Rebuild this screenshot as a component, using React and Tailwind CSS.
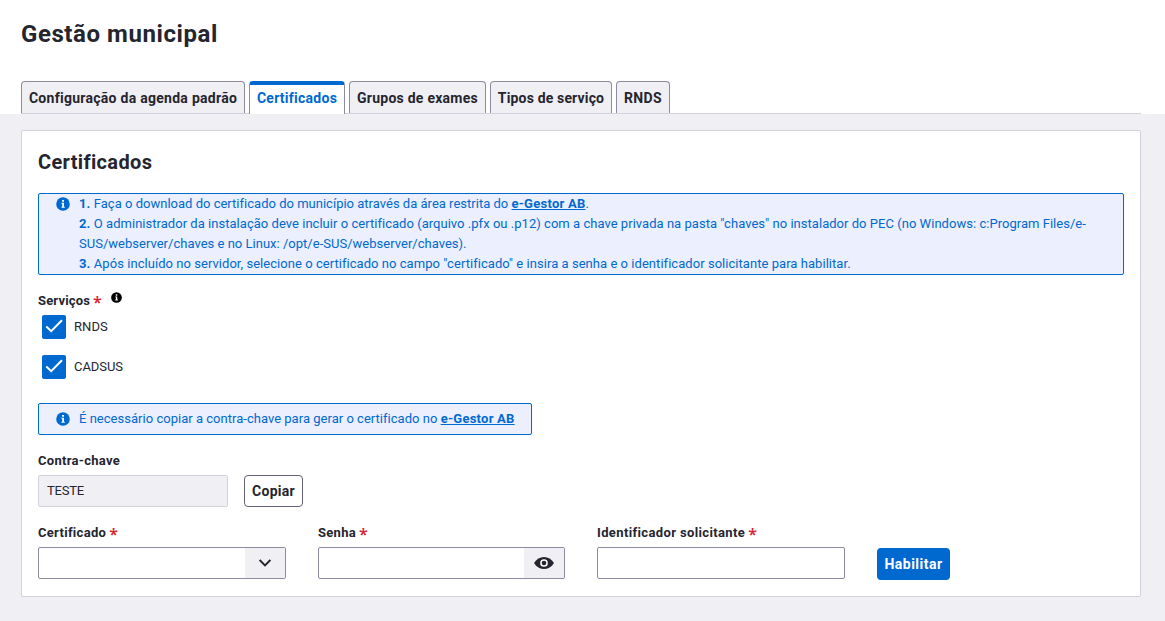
import React from "react";

const tabs = [
  { label: "Configuração da agenda padrão", size: "w-[224px] tracking-[0.276px]" },
  { label: "Certificados", size: "w-24 tracking-[0.256px]", active: true },
  { label: "Grupos de exames", size: "w-[137px] tracking-[0.254px]" },
  { label: "Tipos de serviço", size: "w-[122px] tracking-[0.16px]" },
  { label: "RNDS", size: "w-[54px] tracking-[0.36px]" },
];

function InfoIcon({ className }) {
  return (
    <svg viewBox="0 0 14 14" className={className} aria-hidden="true">
      <circle cx="7" cy="7" r="6.8" fill="currentColor" />
      <path d="M6.1 2.9h1.9v1.8H6.1zM5.4 5.7H8v4h.8v1.1H5.4V9.700h.8V6.800h-.8z" fill="#fff" />
    </svg>
  );
}

function Tab({ label, size, active }) {
  return (
    <div
      className={`${size} flex h-8 shrink-0 justify-center whitespace-nowrap rounded-t border-x border-[#8c8ba3] text-sm font-bold leading-[18px] ${
        active
          ? "-mb-px h-[33px] border-t-4 border-t-[#0069d0] bg-white pt-1 text-[#0069d0]"
          : "border-t bg-[#f0eff4] pt-[7px]"
      }`}
    >
      {label}
    </div>
  );
}

function Label({ children, className = "", required }) {
  return (
    <div className={`flex h-5 items-center whitespace-nowrap text-[13px] font-bold leading-5 ${className}`}>
      {children}
      {required && (
        <span className="ml-[3px] h-5 w-[9px] font-['Noto_Sans',sans-serif] text-base font-semibold leading-[23px] tracking-normal text-[#d92632]">*</span>
      )}
    </div>
  );
}

function Checkbox({ label, className }) {
  return (
    <label className="ml-1 flex h-6 items-center gap-2">
      <span className="flex size-6 items-center justify-center rounded-xs bg-[#0069d0]">
        <svg viewBox="0 0 24 24" className="size-6" fill="none" stroke="#fff" strokeWidth="2">
          <path d="M4.3 11.500 9.200 16.200 20 5.300" />
        </svg>
      </span>
      <span className={`text-[13px] leading-5 ${className}`}>{label}</span>
    </label>
  );
}

function Link({ children }) {
  return (
    <a href="#" className="font-bold tracking-[0.246px] underline">
      {children}
    </a>
  );
}

function Step({ n, children }) {
  return (
    <>
      <b>{n}.</b>
      <span className="ml-[3.500px]">{children}</span>
    </>
  );
}

export default function App() {
  return (
    <div className="flex min-h-[621px] w-full flex-col bg-[#f0eff4] font-[Roboto,sans-serif] text-[#25252f]">
      <header className="h-[114px] bg-white pl-[21px] pr-6 pt-[18px]">
        <h1 className="h-[63px] text-2xl font-bold leading-8 tracking-[0.57px]">Gestão municipal</h1>
        <nav className="flex h-[33px] gap-1 border-b border-[#d2d2dc]">
          {tabs.map((t) => (
            <Tab key={t.label} {...t} />
          ))}
        </nav>
      </header>

      <main className="ml-[21px] mr-6 mt-4 h-[467px] rounded-xs border border-[#d2d2dc] bg-white px-4 pt-[18px]">
        <h2 className="h-11 text-xl font-bold leading-[26px] tracking-[0.341px]">Certificados</h2>

        <section className="flex h-[82px] rounded-xs border border-[#0069d0] bg-[#ebeffe] pl-[17px] text-[13px] leading-5 text-[#0069d0]">
          <InfoIcon className="mr-[9px] mt-[3px] size-3.5 shrink-0" />
          <div className="whitespace-nowrap">
            <p className="tracking-[0.011px]">
              <Step n="1">Faça o download do certificado do município através da área restrita do </Step>
              <Link>e-Gestor AB</Link>.
            </p>
            <p className="tracking-[0.032px]">
              <Step n="2">
                O administrador da instalação deve incluir o certificado (arquivo .pfx ou .p12) com a chave privada na pasta "chaves" no
                instalador do PEC (no Windows: c:Program Files/e-
              </Step>
              <br />
              <span className="tracking-[0.016px]">SUS/webserver/chaves e no Linux: /opt/e-SUS/webserver/chaves).</span>
            </p>
            <p className="tracking-[0.045px]">
              <Step n="3">
                Após incluído no servidor, selecione o certificado no campo "certificado" e insira a senha e o identificador solicitante
                para habilitar.
              </Step>
            </p>
          </div>
        </section>

        <div className="mt-4 flex h-6 items-start">
          <Label required className="tracking-[0.161px]">Serviços</Label>
          <InfoIcon className="ml-[9px] mt-px size-[11px] text-black" />
        </div>
        <div className="flex flex-col gap-4">
          <Checkbox label="RNDS" className="tracking-[0.05px]" />
          <Checkbox label="CADSUS" className="tracking-[-0.05px]" />
        </div>

        <section className="mt-6 flex h-8 w-[494px] items-center whitespace-nowrap rounded-xs border border-[#0069d0] bg-[#ebeffe] pl-[17px] text-[13px] leading-5 text-[#0069d0]">
          <InfoIcon className="mr-[9px] size-3.5 shrink-0" />
          <p className="tracking-[0.023px]">
            É necessário copiar a contra-chave para gerar o certificado no <Link>e-Gestor AB</Link>
          </p>
        </section>

        <div className="mt-4 flex items-end gap-4">
          <div className="w-[190px]">
            <Label className="tracking-[0.284px]">Contra-chave</Label>
            <div className="mt-1 flex h-8 items-center rounded-xs border border-[#d2d2dc] bg-[#f0eff4] px-2 text-[13px] tracking-[-0.2px]">
              TESTE
            </div>
          </div>
          <button className="h-8 w-[59px] rounded border border-[#62617a] bg-white text-sm font-bold tracking-[0.29px]">Copiar</button>
        </div>

        <div className="mt-4 flex items-end">
          <div className="w-[248px]">
            <Label required className="tracking-[0.295px]">Certificado</Label>
            <div className="mt-1 flex h-8 justify-end overflow-hidden rounded-xs border border-[#8c8ba3]">
              <div className="flex w-10 items-center justify-center bg-[#f0eff4]">
                <svg viewBox="0 0 12 8" className="h-2 w-3" fill="none" stroke="currentColor" strokeWidth="2">
                  <path d="m.6 1 5.400 5.400L11.400 1" />
                </svg>
              </div>
            </div>
          </div>
          <div className="ml-8 w-[247px]">
            <Label required className="tracking-[0.29px]">Senha</Label>
            <div className="mt-1 flex h-8 justify-end overflow-hidden rounded-xs border border-[#8c8ba3]">
              <div className="flex w-10 items-center justify-center bg-[#f0eff4]">
                <svg viewBox="0 0 20 12" className="h-3 w-5">
                  <path d="M0 6C2.500 2 6 0 10 0s7.500 2 10 6c-2.500 4-6 6-10 6S2.500 10 0 6Z" fill="currentColor" />
                  <circle cx="10" cy="6" r="3.100" fill="none" stroke="#fff" strokeWidth="1.500" />
                </svg>
              </div>
            </div>
          </div>
          <div className="ml-8 w-[248px]">
            <Label required className="tracking-[0.37px]">Identificador solicitante</Label>
            <div className="mt-1 h-8 rounded-xs border border-[#8c8ba3]" />
          </div>
          <button className="-mb-px ml-8 h-8 w-[73px] rounded bg-[#0069d0] text-sm font-bold tracking-[0.475px] text-white">Habilitar</button>
        </div>
      </main>
    </div>
  );
}
